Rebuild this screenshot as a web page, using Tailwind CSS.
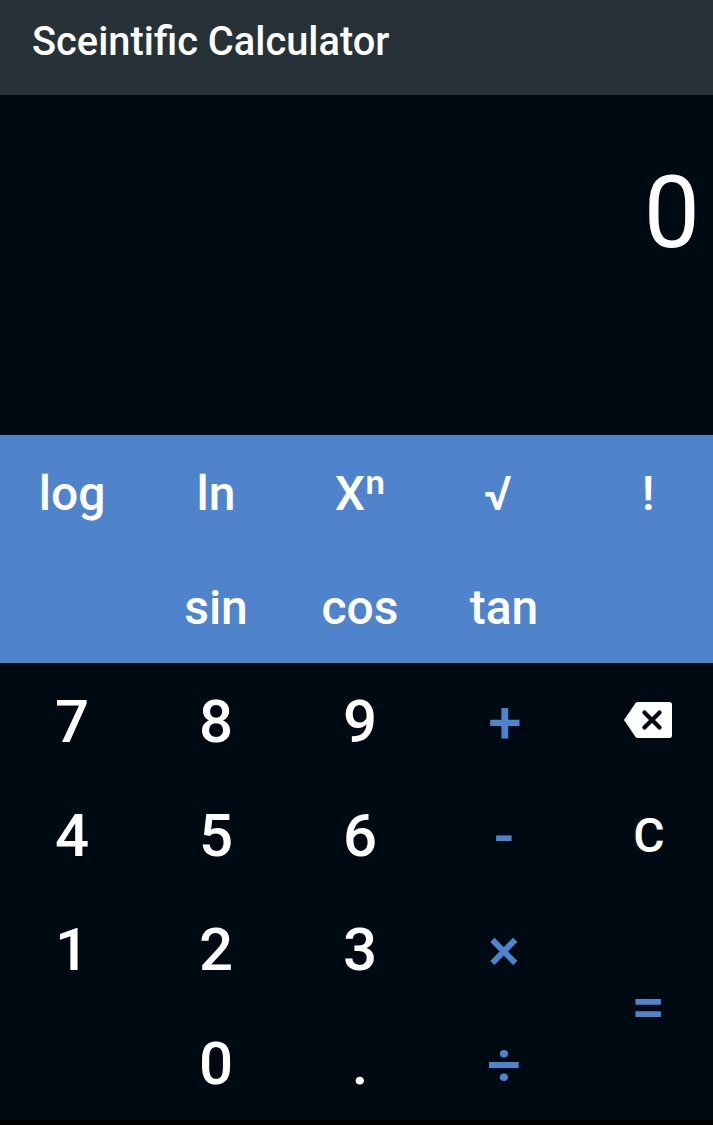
<!DOCTYPE html>
<html lang="en"><head><meta charset="utf-8"><title>Sceintific Calculator</title>
<script src="https://cdn.jsdelivr.net/npm/@tailwindcss/browser@4"></script></head>
<body class="w-[713px] h-[1125px] overflow-hidden bg-black text-white font-[Roboto,sans-serif] font-medium flex flex-col">
<header class="h-[95px] bg-[#263238] pl-8 pt-[18px] text-[39.8px] leading-[47px] shrink-0">Sceintific Calculator</header>
<section class="h-[340px] shrink-0 bg-[#000a12] flex justify-end pr-[13px] pt-[59px] text-[100px] leading-[117px] font-normal">0</section>
<section class="h-[228px] shrink-0 bg-[#4f83cc] grid grid-cols-[repeat(5,144px)] grid-rows-[repeat(2,114px)] text-[48px] leading-[56px] place-items-center *:pt-1">
<span>log</span><span>ln</span><span>Xⁿ</span><span class="pr-[12px]">√</span><span>!</span>
<span></span><span>sin</span><span>cos</span><span>tan</span><span></span>
</section>
<section class="h-[456px] shrink-0 bg-[#000a12] grid grid-cols-[repeat(5,144px)] grid-rows-[repeat(4,114px)] text-[60px] leading-[70px] place-items-center">
<span class="pt-1">7</span><span class="pt-1">8</span><span class="pt-1">9</span><span class="pt-[5px] text-[#4f83cc] pl-[2px]">+</span>
<svg class="w-12 h-9" viewBox="0 0 24 18"><path fill="white" d="M22.700 0H7C6.300 0 5.900.3 5.500.9L0 9l5.500 8.100c.4.6.8.9 1.500.9h15.700c.8 0 1.300-.6 1.300-1.300V1.300C24 .6 23.500 0 22.700 0z"/><path d="M10.200 5.200l7.600 7.600M17.800 5.200l-7.600 7.600" stroke="#000a12" stroke-width="2.100" stroke-linecap="round"/></svg>
<span class="pt-1">4</span><span class="pt-1">5</span><span class="pt-1">6</span><span class="pt-1 text-[#4f83cc]">-</span><span class="pt-1 text-[48px] pl-[2px]">C</span>
<span class="pt-1">1</span><span class="pt-1">2</span><span class="pt-1">3</span><span class="pt-[5px] text-[#4f83cc]">×</span><span class="pt-1 row-span-2 text-[#4f83cc]">=</span>
<span></span><span class="pt-1">0</span><span class="pt-1">.</span><span class="pt-[5px] text-[#4f83cc]">÷</span>
</section>
</body></html>
